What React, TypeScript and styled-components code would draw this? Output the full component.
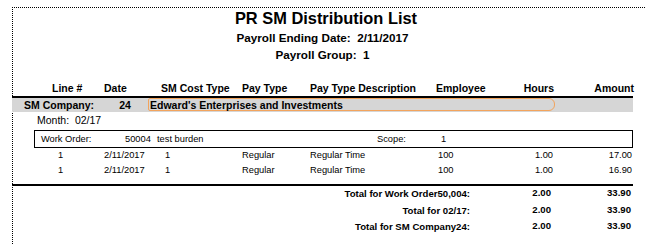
import React from "react";
import styled, { createGlobalStyle } from "styled-components";

const GlobalStyle = createGlobalStyle`
  html, body {
    margin: 0;
    padding: 0;
    background: #ffffff;
  }
  body {
    font-family: "Liberation Sans", Arial, sans-serif;
    color: #000000;
  }
`;

const COLUMNS = "40px 52px 57px 81px 68px 126px 64px 54px 79px";

const Sheet = styled.div`
  margin: 7px 0 0 12px;
  height: 237px;
  box-sizing: border-box;
  border-top: 1px dotted #000;
  border-left: 1px dotted #000;
`;

const Content = styled.div`
  width: 621px;
  margin-left: -1px;
`;

const Title = styled.div`
  text-align: center;
  padding-left: 7px;
  font-weight: bold;
  font-size: 16.4px;
  line-height: 20px;
`;

const SubTitle = styled.div<{ $top: number }>`
  margin-top: ${(p) => p.$top}px;
  text-align: center;
  font-weight: bold;
  font-size: 11.7px;
  line-height: 15px;
  white-space: pre;
`;

const HeaderRow = styled.div`
  display: grid;
  grid-template-columns: ${COLUMNS};
  margin-top: 19px;
  padding-bottom: 1px;
  border-bottom: 2px solid #000;
  font-weight: bold;
  font-size: 10.5px;
  line-height: 14px;
`;

const Cell = styled.div<{ $align?: "left" | "right"; $pad?: number }>`
  text-align: ${(p) => p.$align || "left"};
  padding-left: ${(p) => (p.$align === "right" ? 0 : p.$pad || 0)}px;
  padding-right: ${(p) => (p.$align === "right" ? p.$pad || 0 : 0)}px;
  white-space: nowrap;
`;

const CompanyBand = styled.div`
  display: flex;
  align-items: flex-start;
  height: 14px;
  padding-left: 12px;
  background: #d6d6d6;
  font-weight: bold;
  font-size: 10.5px;
  line-height: 14px;
`;

const CompanyLabel = styled.div`
  width: 86px;
`;

const CompanyNumber = styled.div`
  width: 30px;
  text-align: center;
`;

const CompanyName = styled.div`
  margin-left: 8px;
  width: 407px;
  height: 13px;
  box-sizing: border-box;
  padding-left: 1px;
  border: 1px solid #f3a45c;
  border-radius: 2px 6px 6px 2px;
  line-height: 12px;
  white-space: nowrap;
`;

const MonthRow = styled.div`
  margin-top: 1px;
  padding-left: 25px;
  font-size: 10.5px;
  line-height: 14px;
  white-space: pre;
`;

const OrderBox = styled.div`
  display: grid;
  grid-template-columns: 84px 32px 220px 64px 1fr;
  margin: 3px 0 0 22px;
  width: 599px;
  height: 18px;
  box-sizing: border-box;
  padding-left: 6px;
  border: 1px solid #000;
  font-size: 9.3px;
  line-height: 16px;
  white-space: nowrap;
`;

const DataRow = styled.div`
  display: grid;
  grid-template-columns: ${COLUMNS};
  height: 15px;
  font-size: 9.3px;
  line-height: 15px;
`;

const TotalsRule = styled.div`
  margin-top: 6px;
  height: 2px;
  background: #000;
`;

const TotalRow = styled.div<{ $top: number }>`
  display: grid;
  grid-template-columns: 1fr 81px 80px;
  margin-top: ${(p) => p.$top}px;
  height: 16px;
  font-weight: bold;
  font-size: 9.6px;
  line-height: 16px;
`;

const TotalValue = styled.div`
  text-align: right;
  padding-right: 2px;
  margin-top: -1px;
`;

type Line = {
  line: string;
  date: string;
  costType: string;
  payType: string;
  description: string;
  employee: string;
  hours: string;
  amount: string;
};

const lines: Line[] = [
  {
    line: "1",
    date: "2/11/2017",
    costType: "1",
    payType: "Regular",
    description: "Regular Time",
    employee: "100",
    hours: "1.00",
    amount: "17.00",
  },
  {
    line: "1",
    date: "2/11/2017",
    costType: "1",
    payType: "Regular",
    description: "Regular Time",
    employee: "100",
    hours: "1.00",
    amount: "16.90",
  },
];

const totals = [
  { label: "Total for Work Order50,004:", hours: "2.00", amount: "33.90", top: 0 },
  { label: "Total for 02/17:", hours: "2.00", amount: "33.90", top: 1 },
  { label: "Total for SM Company24:", hours: "2.00", amount: "33.90", top: 0 },
];

export default function App() {
  return (
    <>
      <GlobalStyle />
      <Sheet>
        <Content>
          <Title>PR SM Distribution List</Title>
          <SubTitle $top={2}>{"Payroll Ending Date:  2/11/2017"}</SubTitle>
          <SubTitle $top={2}>{"Payroll Group:  1"}</SubTitle>

          <HeaderRow>
            <div />
            <Cell>Line #</Cell>
            <Cell>Date</Cell>
            <Cell>SM Cost Type</Cell>
            <Cell>Pay Type</Cell>
            <Cell>Pay Type Description</Cell>
            <Cell>Employee</Cell>
            <Cell $align="right">Hours</Cell>
            <Cell $align="right" style={{ marginRight: -1 }}>
              Amount
            </Cell>
          </HeaderRow>

          <CompanyBand>
            <CompanyLabel>SM Company:</CompanyLabel>
            <CompanyNumber>24</CompanyNumber>
            <CompanyName>Edward's Enterprises and Investments</CompanyName>
          </CompanyBand>

          <MonthRow>{"Month:  02/17"}</MonthRow>

          <OrderBox>
            <div>Work Order:</div>
            <div>50004</div>
            <div>test burden</div>
            <div>Scope:</div>
            <div>1</div>
          </OrderBox>

          {lines.map((l, i) => (
            <DataRow key={i}>
              <div />
              <Cell $pad={6}>{l.line}</Cell>
              <Cell>{l.date}</Cell>
              <Cell $pad={4}>{l.costType}</Cell>
              <Cell>{l.payType}</Cell>
              <Cell>{l.description}</Cell>
              <Cell $pad={2}>{l.employee}</Cell>
              <Cell $align="right" $pad={1}>
                {l.hours}
              </Cell>
              <Cell $align="right" $pad={1}>
                {l.amount}
              </Cell>
            </DataRow>
          ))}

          <TotalsRule />

          {totals.map((t) => (
            <TotalRow key={t.label} $top={t.top}>
              <Cell $align="right" $pad={2}>
                {t.label}
              </Cell>
              <TotalValue>{t.hours}</TotalValue>
              <TotalValue>{t.amount}</TotalValue>
            </TotalRow>
          ))}
        </Content>
      </Sheet>
    </>
  );
}
